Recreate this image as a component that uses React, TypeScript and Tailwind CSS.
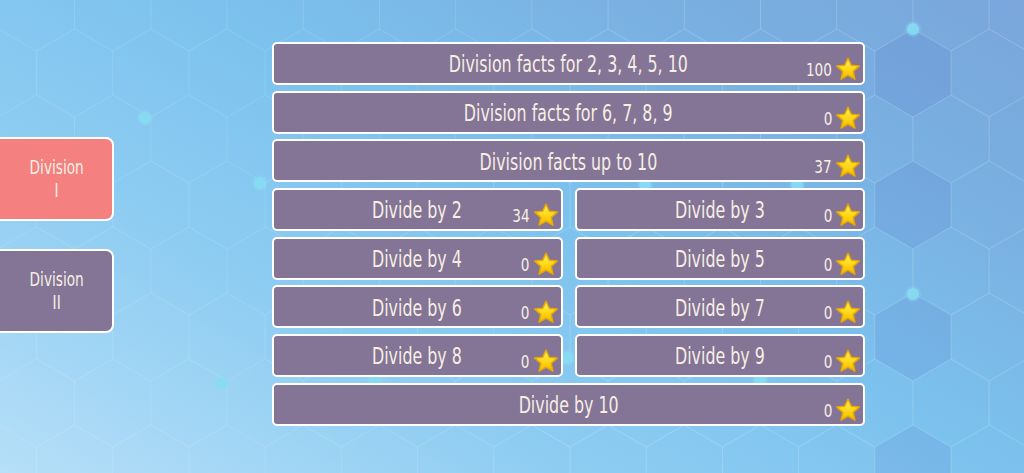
import type { ReactNode } from "react"

type Lesson = { title: string; stars: number }

const wide: Lesson[] = [
  { title: "Division facts for 2, 3, 4, 5, 10", stars: 100 },
  { title: "Division facts for 6, 7, 8, 9", stars: 0 },
  { title: "Division facts up to 10", stars: 37 },
]

const pairs: Lesson[][] = [
  [{ title: "Divide by 2", stars: 34 }, { title: "Divide by 3", stars: 0 }],
  [{ title: "Divide by 4", stars: 0 }, { title: "Divide by 5", stars: 0 }],
  [{ title: "Divide by 6", stars: 0 }, { title: "Divide by 7", stars: 0 }],
  [{ title: "Divide by 8", stars: 0 }, { title: "Divide by 9", stars: 0 }],
]

const last: Lesson = { title: "Divide by 10", stars: 0 }

const font = "font-['DejaVu_Sans_Condensed','DejaVu_Sans',sans-serif] font-stretch-condensed"

// pointy-top hexagon grid, a few cells on the right shaded like cubes
function HexBackdrop() {
  const r = 44
  const w = Math.sqrt(3) * r
  const cells: { x: number; y: number; fill: string; stroke: number }[] = []
  for (let row = -1; row < 8; row++) {
    for (let col = -1; col < 15; col++) {
      const x = col * w + (row % 2 ? w / 2 : 0) + 36.5
      const y = row * r * 1.5 + 7
      let fill = "none"
      if (x > 880) {
        const k = (row * 5 + col * 3 + 40) % 5
        if (k === 0 || k === 3) fill = "rgba(70,100,190,0.12)"
        else if (k === 2) fill = "rgba(150,215,245,0.12)"
      }
      cells.push({ x, y, fill, stroke: x < 500 ? 0.07 : 0.1 })
    }
  }
  const pts = (cx: number, cy: number) =>
    [0, 1, 2, 3, 4, 5]
      .map((i) => {
        const a = (Math.PI / 3) * i - Math.PI / 2
        return `${cx + r * Math.cos(a)},${cy + r * Math.sin(a)}`
      })
      .join(" ")
  const dots = [
    [145, 118], [260, 183], [913, 29], [913, 294], [222, 383],
    [645, 185], [797, 185], [567, 358], [760, 380], [375, 380],
  ]
  return (
    <svg className="absolute inset-0 h-full w-full" viewBox="0 0 1024 473" preserveAspectRatio="none">
      {cells.map((c, i) => (
        <polygon key={i} points={pts(c.x, c.y)} fill={c.fill} stroke={`rgba(255,255,255,${c.stroke})`} strokeWidth="1" />
      ))}
      {dots.map(([x, y], i) => (
        <g key={i}>
          <circle cx={x} cy={y} r="8" fill="#8fe0f4" opacity="0.25" />
          <circle cx={x} cy={y} r="6" fill="#86dcf2" opacity="0.9" />
        </g>
      ))}
    </svg>
  )
}

function Star() {
  return (
    <svg width="26" height="25" viewBox="0 0 26 25">
      <defs>
        <linearGradient id="starFill" x1="0" y1="0" x2="0" y2="1">
          <stop offset="0" stopColor="#fff36a" />
          <stop offset="0.5" stopColor="#ffd91a" />
          <stop offset="1" stopColor="#f2b800" />
        </linearGradient>
      </defs>
      <path
        d="M13 1.2 L16.3 8.2 L24.2 9.1 L18.2 14.4 L19.9 22.2 L13 18.2 L6.1 22.2 L7.8 14.4 L1.8 9.1 L9.7 8.2 Z"
        fill="url(#starFill)"
        stroke="#e8a900"
        strokeWidth="1.5"
        strokeLinejoin="round"
      />
    </svg>
  )
}

function LessonButton({ lesson }: { lesson: Lesson }) {
  return (
    <button className="relative flex h-[43px] items-center justify-center rounded-[5px] border-2 border-white bg-[#847496] pt-[3px]">
      <span className={`inline-block origin-center scale-x-[0.75] text-[23.5px] leading-none text-[#f6efe3] ${font}`}>
        {lesson.title}
      </span>
      <span className="absolute right-[2px] bottom-[1px] flex items-end gap-[3px]">
        <span className={`inline-block origin-right scale-x-[0.84] pb-[3px] text-[18px] leading-none text-[#f6efe3] ${font}`}>
          {lesson.stars}
        </span>
        <Star />
      </span>
    </button>
  )
}

function SideTab({ active, children }: { active?: boolean; children: ReactNode }) {
  return (
    <div
      className={`-ml-3 flex h-[84px] w-[126px] items-center justify-center rounded-[8px] border-2 border-white pl-3 ${
        active ? "bg-[#f48080]" : "bg-[#847496]"
      }`}
    >
      <span className={`inline-block scale-x-[0.76] text-center text-[20px] leading-[23px] text-[#f6efe3] ${font}`}>
        {children}
      </span>
    </div>
  )
}

export default function App() {
  return (
    <div className="relative h-[473px] w-[1024px] overflow-hidden bg-[linear-gradient(30deg,#b6dff8_0%,#8fcdf2_30%,#7cc2ee_55%,#79afe1_80%,#7aa6dc_100%)]">
      <HexBackdrop />
      <div className="relative flex">
        <div className="flex flex-col gap-[28px] pt-[137px]">
          <SideTab active>
            Division
            <br />I
          </SideTab>
          <SideTab>
            Division
            <br />
            II
          </SideTab>
        </div>
        <div className="ml-[158px] mt-[42px] grid w-[593px] grid-cols-2 gap-x-[12px] gap-y-[5.7px]">
          {wide.map((l) => (
            <div key={l.title} className="col-span-2 grid">
              <LessonButton lesson={l} />
            </div>
          ))}
          {pairs.flat().map((l) => (
            <LessonButton key={l.title} lesson={l} />
          ))}
          <div className="col-span-2 grid">
            <LessonButton lesson={last} />
          </div>
        </div>
      </div>
    </div>
  )
}
